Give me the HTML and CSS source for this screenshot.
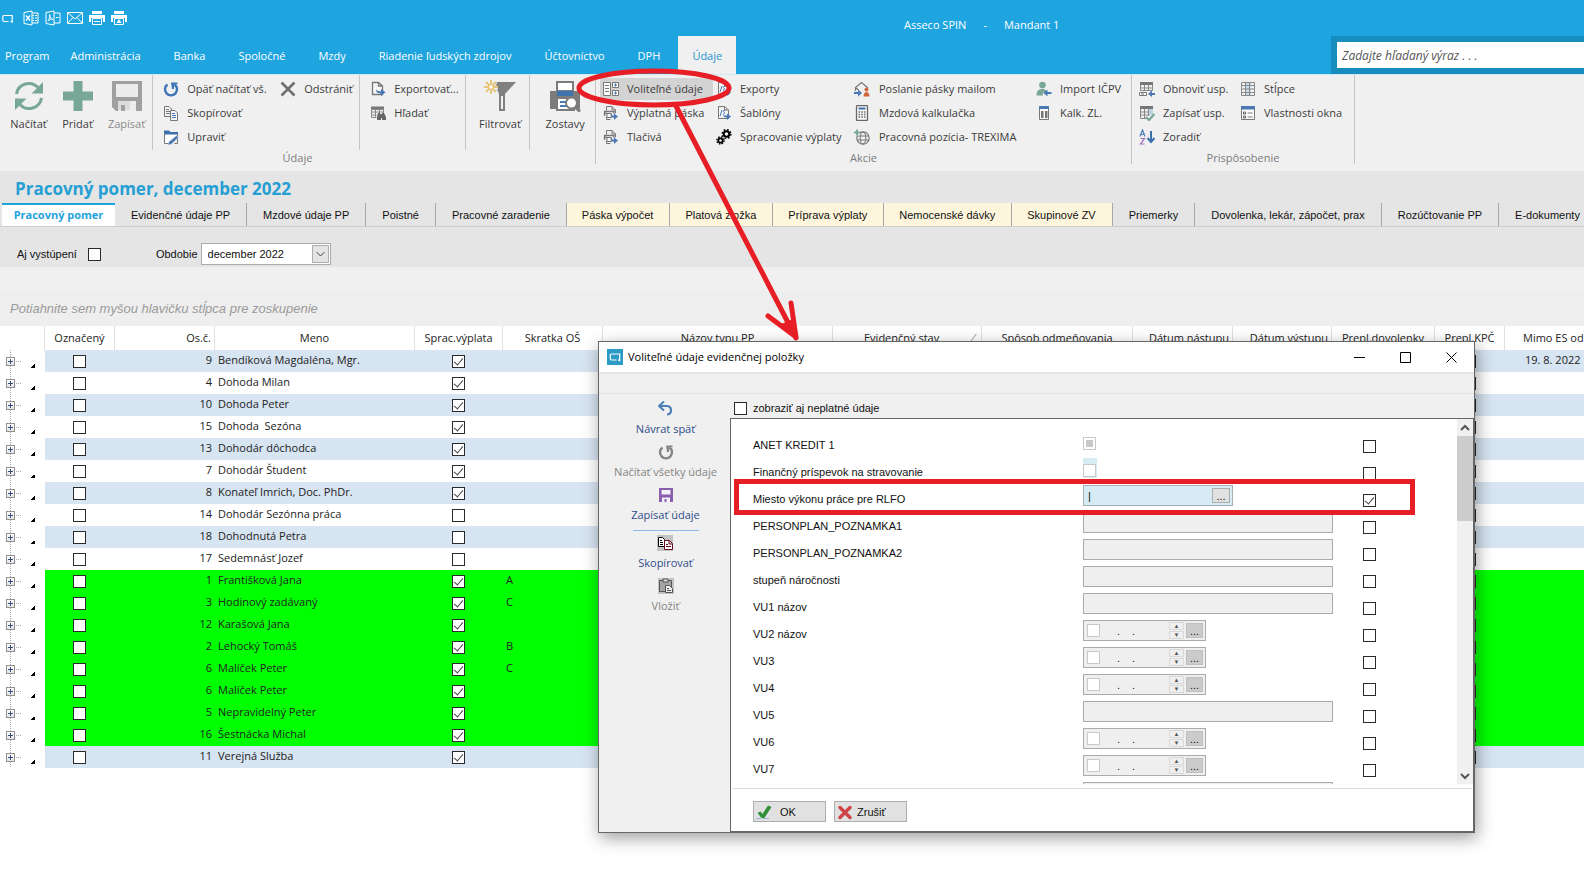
FILE: index.html
```html
<!DOCTYPE html>
<html lang="sk">
<head>
<meta charset="utf-8">
<title>Asseco SPIN - Mandant 1</title>
<link rel="stylesheet" href="styles.css">
</head>
<body>
<svg class="defs" aria-hidden="true">
  <symbol id="i-excel" viewBox="0 0 16 16"><path d="M1 2.500 9 1v14L1 13.500zM9 3h6v10H9M9.500 5.500H11M12 5.500h2M9.500 8H11M12 8h2M9.500 10.500H11M12 10.500h2" fill="none" stroke="#fff"/><path d="M3 5.500l4 5M7 5.500l-4 5" stroke="#fff" stroke-width="1.300"/></symbol>
  <symbol id="i-pdf" viewBox="0 0 16 16"><path d="M1 2.500 9 1v14L1 13.500zM9 3h6v10H9M11 7.500h2.500" fill="none" stroke="#fff"/><path d="M3 11c1.500-2 2-4 1.600-6.500C5 7.500 6 9 8 9.500 6 9 4.500 9.500 3 11z" fill="none" stroke="#fff"/></symbol>
  <symbol id="i-mail" viewBox="0 0 16 16"><path d="M.5 2.500h15v11H.5zM1 3l7 6 7-6M1 13l5-5.500M15 13l-5-5.500" fill="none" stroke="#fff"/></symbol>
  <symbol id="i-print" viewBox="0 0 16 16"><path d="M3 1h10v3H3zM0 5h16v7h-2V8H2v4H0z" fill="#fff"/><path d="M3.500 8.500h9v6h-9zM5 11.500h6" fill="#1ea4df" stroke="#fff"/></symbol>
  <symbol id="i-printa" viewBox="0 0 16 16"><path d="M3 1h10v3H3zM0 5h16v7h-2V8H2v4H0z" fill="#fff"/><path d="M3.500 8.500h9v6h-9z" fill="#1ea4df" stroke="#fff"/><path d="M8 9l2.500 4h-5z" fill="#fff"/></symbol>
  <symbol id="i-refresh" viewBox="0 0 32 32"><path d="M3.500 14A12.500 12.500 0 0 1 25 7.500M28.500 18A12.500 12.500 0 0 1 7 24.500" fill="none" stroke="#78a697" stroke-width="3"/><path d="M30 2v11.500H18.500zM2 30V18.500h11.500z" fill="#78a697"/></symbol>
  <symbol id="i-plus" viewBox="0 0 32 32"><path d="M11.500 1h9v10.500H31v9H20.500V31h-9V20.500H1v-9h10.500z" fill="#78a697"/></symbol>
  <symbol id="i-disk" viewBox="0 0 32 32"><path d="M1 1h30v30H5l-4-4z" fill="#a0a0a0"/><path d="M5 4h22v13H5zM7 21h18v10H7z" fill="#ececec"/><path d="M7 21h12v9H7z" fill="#dcdcdc"/><path d="M10 25h4v6h-4z" fill="#a0a0a0"/></symbol>
  <symbol id="i-reload" viewBox="0 0 16 16"><path d="M4.500 3.500A6 6 0 1 0 11.500 3.500" fill="none" stroke="currentColor" stroke-width="2.400"/><path d="M8 1.500h6.500v1.800H11V8H9z" fill="currentColor"/></symbol>
  <symbol id="i-x" viewBox="0 0 16 16"><path d="M1.500 1.500l13 13M14.500 1.500l-13 13" stroke="#6f6f6f" stroke-width="2.500"/></symbol>
  <symbol id="i-copy" viewBox="0 0 16 16"><path d="M1.500 1.500H6L8.500 4v7.500h-7zM3 4.500h3M3 6.500h4M3 8.500h4" fill="#f4f4f4" stroke="#777"/><path d="M7.500 5.500H12L14.500 8v7.500h-7z" fill="#f4f4f4" stroke="#777"/><path d="M9 8.500h3M9 10.500h4M9 12.500h4" stroke="#4a78b5"/></symbol>
  <symbol id="i-edit" viewBox="0 0 16 16"><path d="M1 2h6l1 2h7v3L8 14H1z" fill="#fff"/><path d="M1 1.500h5L7.500 3H15v2.500H1z" fill="#3c6fae"/><path d="M1.500 4v10.500h4M14.500 5v9.500h-3" fill="none" stroke="#777"/><path d="M13.500 6.500l2 2L8 15.500l-3 .5.7-3z" fill="#4a78b5" stroke="#f0f0f0" stroke-width=".5"/></symbol>
  <symbol id="i-export" viewBox="0 0 16 16"><path d="M2.500 1.500h6L12.500 5v8.500h-10zM8.500 1.500V5h4" fill="#f6f6f6" stroke="#777" stroke-width="1.300"/><path d="M6 8.500c0 3.500 2.500 4 5 4V15l4.500-3.700L11 8v2.200c-2 0-3.500-.2-5-1.700z" fill="#4a78b5"/></symbol>
  <symbol id="i-find" viewBox="0 0 16 16"><path d="M1 1.500h13v3H1z" fill="#777"/><path d="M1.500 4.500h12V8M1.500 4.500v8h5M1.500 7h12M1.500 10h5M5.500 4v8M9.500 4v4" fill="none" stroke="#888"/><path d="M8 8h2v1h2V8h2l2 4v3h-4v-2h-1v2H7v-3z" fill="#666"/></symbol>
  <symbol id="i-filter" viewBox="0 0 32 32"><path d="M10 2h22L21 14v17h-6V14z" fill="#808080"/><path d="M17 16h2v13h-2z" fill="#f0f0f0"/><g stroke="#f0f0f0" stroke-width="3.500"><path d="M7 0v15M0 7.500h14M2 2l10 11M12 2L2 13"/></g><g stroke="#e6c57c" stroke-width="2"><path d="M7 0v14M0 7h14M2 2l10 10M12 2L2 12"/></g><circle cx="7" cy="7" r="2.500" fill="#fff" stroke="#e6c57c" stroke-width="1.500"/></symbol>
  <symbol id="i-report" viewBox="0 0 32 32"><path d="M1 11h30v18H1z" fill="#7c7c7c"/><path d="M8 2h16v9H8z" fill="#fff" stroke="#7c7c7c" stroke-width="2"/><path d="M8 11h16v5H8z" fill="#3f73ad"/><path d="M8 18h17v12H8z" fill="#fff" stroke="#7c7c7c" stroke-width="2"/><path d="M11 22h6M11 26h7" stroke="#4a78b5" stroke-width="2"/><circle cx="22.500" cy="23" r="5.500" fill="#fff" stroke="#7c7c7c" stroke-width="2"/><path d="M26 27l5 4.500" stroke="#7c7c7c" stroke-width="3"/></symbol>
  <symbol id="i-optional" viewBox="0 0 16 16"><path d="M.5 1.500h7v13h-7z" fill="#fafafa" stroke="#777"/><path d="M2 4.500h4M2 7.500h4M2 10.500h4" stroke="#777"/><path d="M9.500 1.500h6v5h-6zM9.500 9.500h6v5h-6z" fill="#fafafa" stroke="#777"/><path d="M11 4h3M12.500 2.500v3M11 12h3M12.500 10.500v3" stroke="#4a78b5"/></symbol>
  <symbol id="i-slip" viewBox="0 0 16 16"><path d="M3.500 5.500v-4h5.500L12.500 5v3M3.500 11.500v3h4M9 1.500V5h3.500" fill="none" stroke="#777"/><path d="M1.500 11V6.500H11V9M1 8.500h3" fill="none" stroke="#777" stroke-width="1.300"/><path d="M4 8.500h4.500v4H4z" fill="#fff" stroke="#777"/><path d="M7 9.500c.5 2.500 2 3 4 3v2.500l4-3.500-4-3v2c-2 0-3 0-4-1z" fill="#4a78b5"/></symbol>
  <symbol id="i-template" viewBox="0 0 16 16"><path d="M2.500 1.500h6L12.500 5v8.500h-10zM8.500 1.500V5h4" fill="#f6f6f6" stroke="#777"/><path d="M4 11l2-6M9 5.500c-2-.5-2 1-1 1.700s.5 2-1 1.800" fill="none" stroke="#4a78b5"/><path d="M7 9.500c.5 2.500 2 3 4 3v2.500l4-3.500-4-3v2c-2 0-3 0-4-1z" fill="#4a78b5"/></symbol>
  <symbol id="i-gears" viewBox="0 0 16 16"><circle cx="10.500" cy="5" r="2.800" fill="none" stroke="#000" stroke-width="2"/><circle cx="10.500" cy="5" r="4.300" fill="none" stroke="#000" stroke-width="1.500" stroke-dasharray="1.700 1.680"/><circle cx="4.500" cy="11.500" r="2.200" fill="none" stroke="#000" stroke-width="1.800"/><circle cx="4.500" cy="11.500" r="3.600" fill="none" stroke="#000" stroke-width="1.400" stroke-dasharray="1.500 1.330"/></symbol>
  <symbol id="i-sendmail" viewBox="0 0 16 16"><path d="M1.500 10V6.500L7.500 1.500l6 5V8M1.500 6.500l3 2.500" fill="none" stroke="#777" stroke-width="1.200"/><path d="M0 11h4V8.500l4 3.500-4 3.500V13H0z" fill="#4a78b5"/><circle cx="12.500" cy="8.500" r="2" fill="#d0663e"/><path d="M9.500 15.500c0-6 6-6 6 0z" fill="#d0663e"/></symbol>
  <symbol id="i-calc" viewBox="0 0 16 16"><rect x="2.500" y=".5" width="11" height="15" rx="1" fill="#fafafa" stroke="#666" stroke-width="1.300"/><path d="M4.500 2.500h7v2h-7z" fill="#3c6fae"/><path d="M4.500 7h7M4.500 9.500h7M4.500 12h7" stroke="#666" stroke-width="1.500" stroke-dasharray="1.600 1.100"/></symbol>
  <symbol id="i-globe" viewBox="0 0 16 16"><circle cx="9" cy="9" r="6.200" fill="none" stroke="#777" stroke-width="1.200"/><ellipse cx="9" cy="9" rx="2.800" ry="6" fill="none" stroke="#777"/><path d="M3 7h12M3 11h12" stroke="#777"/><path d="M0 3.500h6M3 .5v6" stroke="#f0f0f0" stroke-width="3.500"/><path d="M0 3.500h6M3 .5v6" stroke="#78a697" stroke-width="1.800"/></symbol>
  <symbol id="i-person" viewBox="0 0 16 16"><circle cx="6.500" cy="4" r="3.300" fill="#78a697"/><path d="M.5 14.500c0-8 9-8 10-4L7 12v2.500z" fill="#78a697"/><path d="M15.500 11h-4V8.500L7.500 12l4 3.500V13h4z" fill="#4a78b5"/></symbol>
  <symbol id="i-kalk" viewBox="0 0 16 16"><path d="M3.500 1.500h9v13h-9z" fill="#fafafa" stroke="#777"/><path d="M3 1h10v3H3z" fill="#4a78b5"/><path d="M5 6h2.500v7H5zM9 6h2.500v7H9z" fill="#777"/></symbol>
  <symbol id="i-layload" viewBox="0 0 16 16"><path d="M1 1h13v3H1z" fill="#777"/><path d="M1.500 4v5.500h12V4M1.500 7h12M5.500 4v5M9.500 4v5" fill="none" stroke="#888"/><path d="M.5 11.500h7v3h-7zM2 13h3" fill="#fff" stroke="#777"/><path d="M16 12h-3V9.500L9 13l4 3v-2h3z" fill="#4a78b5"/></symbol>
  <symbol id="i-laysave" viewBox="0 0 16 16"><path d="M1 1h13v3H1z" fill="#777"/><path d="M1.500 4v9.500h7M13.500 4v5M1.500 7h12M1.500 10h9M5.500 4v9M9.500 4v7" fill="none" stroke="#888"/><path d="M10 4h4v6h-4z" fill="#b9d3e6"/><path d="M7 12l3 3 5.500-6" fill="none" stroke="#78a697" stroke-width="2.200"/></symbol>
  <symbol id="i-sort" viewBox="0 0 16 16"><path d="M1 7.500L3.500 1 6 7.500M2 5.500h3" fill="none" stroke="#4a78b5" stroke-width="1.200"/><path d="M1.500 9.500h4l-4 5.500h4" fill="none" stroke="#9a6bb5" stroke-width="1.200"/><path d="M12 2v10M8.500 9l3.500 4 3.500-4" fill="none" stroke="#3c6fae" stroke-width="2"/></symbol>
  <symbol id="i-cols" viewBox="0 0 16 16"><path d="M5 1h6v14H5z" fill="#c9dcec"/><path d="M1.500 1.500h13v13h-13zM5.500 1v14M9.500 1v14M1 4.500h13M1 8h13M1 11.500h13" fill="none" stroke="#888"/></symbol>
  <symbol id="i-props" viewBox="0 0 16 16"><path d="M1.500 2.500h13v12h-13z" fill="#fafafa" stroke="#777"/><path d="M1 1h14v3.500H1z" fill="#4a78b5"/><path d="M7.500 8h5M7.500 12h5" stroke="#777" stroke-width="1.200"/><path d="M3.500 7h2v2h-2zM3.500 11h2v2h-2z" fill="none" stroke="#666"/></symbol>
  <symbol id="i-logo" viewBox="0 0 16 16"><path d="M0 0h16v16H0z" fill="#2b9bc6"/><path d="M9.500 11H4.500A1.200 1.200 0 0 1 3.300 9.800V6.200A1.200 1.200 0 0 1 4.500 5h8.200v6.600L11 11" fill="none" stroke="#fff" stroke-width="1.200"/></symbol>
  <symbol id="i-undo" viewBox="0 0 16 16"><path d="M2 5h6.500c6 0 6 8.500.5 8.500" fill="none" stroke="#4a7fb8" stroke-width="2.200"/><path d="M6 .5L1 5l5 4.500" fill="none" stroke="#4a7fb8" stroke-width="2"/></symbol>
  <symbol id="i-save" viewBox="0 0 16 16"><path d="M1 1h14v14H1z" fill="#8a5fb0"/><path d="M3.500 3h9v4.500h-9zM4 10.500h8V15H4z" fill="#f4f0f7"/><path d="M6.500 12h2v3h-2z" fill="#8a5fb0"/></symbol>
  <symbol id="i-copy2" viewBox="0 0 16 16"><path d="M0 0h16v16H0z" fill="#c3c3c3"/><path d="M1.500 2.500h4l2 2v7h-6zM3 5.500h2M3 7.500h3M3 9.500h3" fill="#fff" stroke="#000"/><path d="M7.500 5.500h5l3 3v6h-8zM12 6v3h3M9 9.500h2M9 11.500h5M9 13.500h0" fill="#fff" stroke="#6d0a20"/></symbol>
  <symbol id="i-paste" viewBox="0 0 16 16"><path d="M0 0h16v16H0z" fill="#c3c3c3"/><path d="M1.500 2.500h12v11h-12z" fill="#a5a5a5" stroke="#555"/><path d="M5 1h5v3H5z" fill="#ddd" stroke="#555"/><path d="M7.500 7.500h4l3 3v4h-7zM9 10.500h2M9 12.500h4" fill="#eee" stroke="#555"/></symbol>
  <symbol id="i-ok" viewBox="0 0 16 16"><path d="M0 14.500h5M8 14.500h5" stroke="#9fb4dc"/><path d="M1.500 9l3-1.500L6.500 10 12 1.500l3.500 1.500L8 14.500 5.500 14z" fill="#2f8f3a"/></symbol>
  <symbol id="i-no" viewBox="0 0 16 16"><path d="M3 3.500l10 10M13 3.500l-10 10" stroke="#cf4547" stroke-width="3.500" stroke-linecap="round"/></symbol>
</svg>

<div class="app">
  <header class="top">
    <div class="quick">
      <button class="qb qb-logo" aria-label="Menu"><svg viewBox="0 0 16 16"><path d="M8.500 11.500H4A1.200 1.200 0 0 1 2.800 10.300V6.700A1.200 1.200 0 0 1 4 5.500h8.200v6.600l-1.700-.6" fill="none" stroke="#fff" stroke-width="1.200"/></svg></button>
      <button class="qb" aria-label="Excel"><svg><use href="#i-excel"/></svg></button>
      <button class="qb" aria-label="PDF"><svg><use href="#i-pdf"/></svg></button>
      <button class="qb" aria-label="Mail"><svg><use href="#i-mail"/></svg></button>
      <button class="qb" aria-label="Tlač"><svg><use href="#i-print"/></svg></button>
      <button class="qb" aria-label="Náhľad"><svg><use href="#i-printa"/></svg></button>
      <div class="apptitle"><span>Asseco SPIN</span><span>-</span><span>Mandant 1</span></div>
    </div>
    <nav class="menu">
      <a href="#">Program</a><a href="#">Administrácia</a><a href="#">Banka</a><a href="#">Spoločné</a><a href="#">Mzdy</a><a href="#">Riadenie ľudských zdrojov</a><a href="#">Účtovníctvo</a><a href="#">DPH</a><a href="#" class="on">Údaje</a>
      <div class="search"><input type="text" placeholder="Zadajte hľadaný výraz . . ." aria-label="Hľadať výraz"></div>
    </nav>
  </header>

  <div class="ribbon">
    <section class="group g1">
      <div class="parts">
        <div class="part bigs">
          <button class="big"><svg><use href="#i-refresh"/></svg>Načítať</button>
          <button class="big"><svg><use href="#i-plus"/></svg>Pridať</button>
          <button class="big off"><svg><use href="#i-disk"/></svg>Zapísať</button>
        </div>
        <div class="part acts a1">
          <button class="act"><svg class="blue"><use href="#i-reload"/></svg>Opäť načítať vš.</button>
          <button class="act"><svg><use href="#i-copy"/></svg>Skopírovať</button>
          <button class="act"><svg><use href="#i-edit"/></svg>Upraviť</button>
          <button class="act"><svg><use href="#i-x"/></svg>Odstrániť</button>
        </div>
        <div class="part acts a2">
          <button class="act"><svg><use href="#i-export"/></svg>Exportovať...</button>
          <button class="act"><svg><use href="#i-find"/></svg>Hľadať</button>
        </div>
        <div class="part one"><button class="big"><svg><use href="#i-filter"/></svg>Filtrovať</button></div>
        <div class="part one"><button class="big"><svg><use href="#i-report"/></svg>Zostavy</button></div>
      </div>
      <h3>Údaje</h3>
    </section>
    <section class="group g2">
      <div class="acts a3">
        <button class="act hot"><svg><use href="#i-optional"/></svg>Voliteľné údaje</button>
        <button class="act"><svg><use href="#i-slip"/></svg>Výplatná páska</button>
        <button class="act"><svg><use href="#i-slip"/></svg>Tlačivá</button>
        <button class="act"><svg><use href="#i-template"/></svg>Exporty</button>
        <button class="act"><svg><use href="#i-template"/></svg>Šablóny</button>
        <button class="act"><svg><use href="#i-gears"/></svg>Spracovanie výplaty</button>
        <button class="act wide"><svg><use href="#i-sendmail"/></svg>Poslanie pásky mailom</button>
        <button class="act wide"><svg><use href="#i-calc"/></svg>Mzdová kalkulačka</button>
        <button class="act wide"><svg><use href="#i-globe"/></svg>Pracovná pozícia- TREXIMA</button>
        <button class="act"><svg><use href="#i-person"/></svg>Import IČPV</button>
        <button class="act"><svg><use href="#i-kalk"/></svg>Kalk. ZL.</button>
      </div>
      <h3>Akcie</h3>
    </section>
    <section class="group g3">
      <div class="acts a4">
        <button class="act"><svg><use href="#i-layload"/></svg>Obnoviť usp.</button>
        <button class="act"><svg><use href="#i-laysave"/></svg>Zapísať usp.</button>
        <button class="act"><svg><use href="#i-sort"/></svg>Zoradiť</button>
        <button class="act"><svg><use href="#i-cols"/></svg>Stĺpce</button>
        <button class="act"><svg><use href="#i-props"/></svg>Vlastnosti okna</button>
      </div>
      <h3>Prispôsobenie</h3>
    </section>
  </div>

  <div class="head">
    <h1>Pracovný pomer, december 2022</h1>
    <nav class="tabs">
      <a href="#" class="cur">Pracovný pomer</a><a href="#">Evidenčné údaje PP</a><a href="#">Mzdové údaje PP</a><a href="#">Poistné</a><a href="#">Pracovné zaradenie</a><a href="#" class="y">Páska výpočet</a><a href="#" class="y">Platová zložka</a><a href="#" class="y">Príprava výplaty</a><a href="#" class="y">Nemocenské dávky</a><a href="#" class="y">Skupinové ZV</a><a href="#">Priemerky</a><a href="#">Dovolenka, lekár, zápočet, prax</a><a href="#">Rozúčtovanie PP</a><a href="#">E-dokumenty</a>
    </nav>
    <div class="filter">
      <label for="left">Aj vystúpení</label><input type="checkbox" id="left">
      <label for="period" class="lp">Obdobie</label>
      <div class="sel"><select id="period"><option>december 2022</option></select><svg viewBox="0 0 17 18"><path d="M.5.500h16v17H.5z" fill="#e4e4e4" stroke="#adadad"/><path d="M4.500 7l4 4 4-4" fill="none" stroke="#444"/></svg></div>
    </div>
  </div>
  <div class="band"></div>
  <div class="grouping">Potiahnite sem myšou hlavičku stĺpca pre zoskupenie</div>

  <table class="grid">
    <colgroup><col class="c1"><col class="c2"><col class="c3"><col class="c4"><col class="c5"><col class="c6"><col class="c7"><col class="c8"><col class="c9"><col class="c10"><col class="c11"><col class="c12"><col class="c13"><col></colgroup>
    <thead><tr><th></th><th>Označený</th><th class="r">Os.č.</th><th>Meno</th><th>Sprac.výplata</th><th>Skratka OŠ</th><th>Názov typu PP</th><th><span class="sorted">Evidenčný stav<i>⁄</i></span></th><th>Spôsob odmeňovania</th><th class="r">Dátum nástupu</th><th class="r">Dátum výstupu</th><th>Prepl.dovolenky</th><th>Prepl.KPČ</th><th class="last">Mimo ES od</th></tr></thead>
    <tbody>
      <tr class="b"><td class="t"></td><td class="c"><input type="checkbox" aria-label="Označený"></td><td class="r">9</td><td>Bendíková Magdaléna, Mgr.</td><td class="c"><input type="checkbox" checked aria-label="Výplata"></td><td></td><td colspan="6"></td><td class="c"><input type="checkbox" aria-label="KPČ"></td><td class="last">19. 8. 2022</td></tr>
      <tr><td class="t"></td><td class="c"><input type="checkbox" aria-label="Označený"></td><td class="r">4</td><td>Dohoda Milan</td><td class="c"><input type="checkbox" checked aria-label="Výplata"></td><td></td><td colspan="6"></td><td class="c"><input type="checkbox" aria-label="KPČ"></td><td></td></tr>
      <tr class="b"><td class="t"></td><td class="c"><input type="checkbox" aria-label="Označený"></td><td class="r">10</td><td>Dohoda Peter</td><td class="c"><input type="checkbox" checked aria-label="Výplata"></td><td></td><td colspan="6"></td><td class="c"><input type="checkbox" aria-label="KPČ"></td><td></td></tr>
      <tr><td class="t"></td><td class="c"><input type="checkbox" aria-label="Označený"></td><td class="r">15</td><td>Dohoda&nbsp; Sezóna</td><td class="c"><input type="checkbox" checked aria-label="Výplata"></td><td></td><td colspan="6"></td><td class="c"><input type="checkbox" aria-label="KPČ"></td><td></td></tr>
      <tr class="b"><td class="t"></td><td class="c"><input type="checkbox" aria-label="Označený"></td><td class="r">13</td><td>Dohodár dôchodca</td><td class="c"><input type="checkbox" checked aria-label="Výplata"></td><td></td><td colspan="6"></td><td class="c"><input type="checkbox" aria-label="KPČ"></td><td></td></tr>
      <tr><td class="t"></td><td class="c"><input type="checkbox" aria-label="Označený"></td><td class="r">7</td><td>Dohodár Študent</td><td class="c"><input type="checkbox" checked aria-label="Výplata"></td><td></td><td colspan="6"></td><td class="c"><input type="checkbox" aria-label="KPČ"></td><td></td></tr>
      <tr class="b"><td class="t"></td><td class="c"><input type="checkbox" aria-label="Označený"></td><td class="r">8</td><td>Konateľ Imrich, Doc. PhDr.</td><td class="c"><input type="checkbox" checked aria-label="Výplata"></td><td></td><td colspan="6"></td><td class="c"><input type="checkbox" aria-label="KPČ"></td><td></td></tr>
      <tr><td class="t"></td><td class="c"><input type="checkbox" aria-label="Označený"></td><td class="r">14</td><td>Dohodár Sezónna práca</td><td class="c"><input type="checkbox" aria-label="Výplata"></td><td></td><td colspan="6"></td><td class="c"><input type="checkbox" aria-label="KPČ"></td><td></td></tr>
      <tr class="b"><td class="t"></td><td class="c"><input type="checkbox" aria-label="Označený"></td><td class="r">18</td><td>Dohodnutá Petra</td><td class="c"><input type="checkbox" aria-label="Výplata"></td><td></td><td colspan="6"></td><td class="c"><input type="checkbox" aria-label="KPČ"></td><td></td></tr>
      <tr><td class="t"></td><td class="c"><input type="checkbox" aria-label="Označený"></td><td class="r">17</td><td>Sedemnásť Jozef</td><td class="c"><input type="checkbox" aria-label="Výplata"></td><td></td><td colspan="6"></td><td class="c"><input type="checkbox" aria-label="KPČ"></td><td></td></tr>
      <tr class="g"><td class="t"></td><td class="c"><input type="checkbox" aria-label="Označený"></td><td class="r">1</td><td>Františková Jana</td><td class="c"><input type="checkbox" checked aria-label="Výplata"></td><td>A</td><td colspan="6"></td><td class="c"><input type="checkbox" aria-label="KPČ"></td><td></td></tr>
      <tr class="g"><td class="t"></td><td class="c"><input type="checkbox" aria-label="Označený"></td><td class="r">3</td><td>Hodinový zadávaný</td><td class="c"><input type="checkbox" checked aria-label="Výplata"></td><td>C</td><td colspan="6"></td><td class="c"><input type="checkbox" aria-label="KPČ"></td><td></td></tr>
      <tr class="g"><td class="t"></td><td class="c"><input type="checkbox" aria-label="Označený"></td><td class="r">12</td><td>Karašová Jana</td><td class="c"><input type="checkbox" checked aria-label="Výplata"></td><td></td><td colspan="6"></td><td class="c"><input type="checkbox" aria-label="KPČ"></td><td></td></tr>
      <tr class="g"><td class="t"></td><td class="c"><input type="checkbox" aria-label="Označený"></td><td class="r">2</td><td>Lehocký Tomáš</td><td class="c"><input type="checkbox" checked aria-label="Výplata"></td><td>B</td><td colspan="6"></td><td class="c"><input type="checkbox" aria-label="KPČ"></td><td></td></tr>
      <tr class="g"><td class="t"></td><td class="c"><input type="checkbox" aria-label="Označený"></td><td class="r">6</td><td>Malíček Peter</td><td class="c"><input type="checkbox" checked aria-label="Výplata"></td><td>C</td><td colspan="6"></td><td class="c"><input type="checkbox" aria-label="KPČ"></td><td></td></tr>
      <tr class="g"><td class="t"></td><td class="c"><input type="checkbox" aria-label="Označený"></td><td class="r">6</td><td>Malíček Peter</td><td class="c"><input type="checkbox" checked aria-label="Výplata"></td><td></td><td colspan="6"></td><td class="c"><input type="checkbox" aria-label="KPČ"></td><td></td></tr>
      <tr class="g"><td class="t"></td><td class="c"><input type="checkbox" aria-label="Označený"></td><td class="r">5</td><td>Nepravidelný Peter</td><td class="c"><input type="checkbox" checked aria-label="Výplata"></td><td></td><td colspan="6"></td><td class="c"><input type="checkbox" aria-label="KPČ"></td><td></td></tr>
      <tr class="g"><td class="t"></td><td class="c"><input type="checkbox" aria-label="Označený"></td><td class="r">16</td><td>Šestnácka Michal</td><td class="c"><input type="checkbox" checked aria-label="Výplata"></td><td></td><td colspan="6"></td><td class="c"><input type="checkbox" aria-label="KPČ"></td><td></td></tr>
      <tr class="b"><td class="t"></td><td class="c"><input type="checkbox" aria-label="Označený"></td><td class="r">11</td><td>Verejná Služba</td><td class="c"><input type="checkbox" checked aria-label="Výplata"></td><td></td><td colspan="6"></td><td class="c"><input type="checkbox" aria-label="KPČ"></td><td></td></tr>
    </tbody>
  </table>
</div>

<div class="dialog" role="dialog" aria-labelledby="dt">
  <div class="bar">
    <svg class="logo"><use href="#i-logo"/></svg><h2 id="dt">Voliteľné údaje evidenčnej položky</h2>
    <button aria-label="Minimalizovať"><svg viewBox="0 0 11 11"><path d="M0 5.500h11" stroke="#000"/></svg></button>
    <button aria-label="Maximalizovať"><svg viewBox="0 0 11 11"><path d="M.5.500h10v10H.5z" fill="none" stroke="#000"/></svg></button>
    <button aria-label="Zavrieť"><svg viewBox="0 0 11 11"><path d="M.5.500l10 10M10.500.500l-10 10" stroke="#000"/></svg></button>
  </div>
  <div class="strip"></div>
  <div class="body">
    <div class="side">
      <button><svg><use href="#i-undo"/></svg>Návrat späť</button>
      <button class="off"><svg><use href="#i-reload"/></svg>Načítať všetky údaje</button>
      <button><svg><use href="#i-save"/></svg>Zapísať údaje</button>
      <hr>
      <button><svg><use href="#i-copy2"/></svg>Skopírovať</button>
      <button class="off"><svg><use href="#i-paste"/></svg>Vložiť</button>
    </div>
    <div class="main">
      <div class="inv"><input type="checkbox" id="inv"><label for="inv">zobraziť aj neplatné údaje</label></div>
      <div class="panel">
        <div class="scroll">
          <div class="rows">
            <div class="row"><label for="f0">ANET KREDIT 1</label><span class="cell"><input type="checkbox" class="dim mid" id="f0"></span><input type="checkbox" class="pick" aria-label="Použiť ANET KREDIT 1"></div>
            <div class="row"><label for="f1">Finančný príspevok na stravovanie</label><span class="cell"><span class="tint"><input type="checkbox" class="dim" id="f1"></span></span><input type="checkbox" class="pick" aria-label="Použiť príspevok"></div>
            <div class="row"><label for="f2">Miesto výkonu práce pre RLFO</label><span class="cell"><span class="lookup"><input type="text" id="f2" value="|"><button aria-label="Vybrať">...</button></span></span><input type="checkbox" class="pick" checked aria-label="Použiť miesto"></div>
            <div class="row"><label for="f3">PERSONPLAN_POZNAMKA1</label><span class="cell"><input type="text" class="tx" id="f3" disabled></span><input type="checkbox" class="pick" aria-label="Použiť"></div>
            <div class="row"><label for="f4">PERSONPLAN_POZNAMKA2</label><span class="cell"><input type="text" class="tx" id="f4" disabled></span><input type="checkbox" class="pick" aria-label="Použiť"></div>
            <div class="row"><label for="f5">stupeň náročnosti</label><span class="cell"><input type="text" class="tx" id="f5" disabled></span><input type="checkbox" class="pick" aria-label="Použiť"></div>
            <div class="row"><label for="f6">VU1 názov</label><span class="cell"><input type="text" class="tx" id="f6" disabled></span><input type="checkbox" class="pick" aria-label="Použiť"></div>
            <div class="row"><label for="f7">VU2 názov</label><span class="cell"><span class="date"><input type="checkbox" class="dim" id="f7"><span class="dots"><b>.</b><b>.</b></span><span class="spin"><button aria-label="Viac">▲</button><button aria-label="Menej">▼</button></span><button class="more" aria-label="Vybrať">...</button></span></span><input type="checkbox" class="pick" aria-label="Použiť"></div>
            <div class="row"><label for="f8">VU3</label><span class="cell"><span class="date"><input type="checkbox" class="dim" id="f8"><span class="dots"><b>.</b><b>.</b></span><span class="spin"><button aria-label="Viac">▲</button><button aria-label="Menej">▼</button></span><button class="more" aria-label="Vybrať">...</button></span></span><input type="checkbox" class="pick" aria-label="Použiť"></div>
            <div class="row"><label for="f9">VU4</label><span class="cell"><span class="date"><input type="checkbox" class="dim" id="f9"><span class="dots"><b>.</b><b>.</b></span><span class="spin"><button aria-label="Viac">▲</button><button aria-label="Menej">▼</button></span><button class="more" aria-label="Vybrať">...</button></span></span><input type="checkbox" class="pick" aria-label="Použiť"></div>
            <div class="row"><label for="f10">VU5</label><span class="cell"><input type="text" class="tx" id="f10" disabled></span><input type="checkbox" class="pick" aria-label="Použiť"></div>
            <div class="row"><label for="f11">VU6</label><span class="cell"><span class="date"><input type="checkbox" class="dim" id="f11"><span class="dots"><b>.</b><b>.</b></span><span class="spin"><button aria-label="Viac">▲</button><button aria-label="Menej">▼</button></span><button class="more" aria-label="Vybrať">...</button></span></span><input type="checkbox" class="pick" aria-label="Použiť"></div>
            <div class="row"><label for="f12">VU7</label><span class="cell"><span class="date"><input type="checkbox" class="dim" id="f12"><span class="dots"><b>.</b><b>.</b></span><span class="spin"><button aria-label="Viac">▲</button><button aria-label="Menej">▼</button></span><button class="more" aria-label="Vybrať">...</button></span></span><input type="checkbox" class="pick" aria-label="Použiť"></div>
            <div class="row"><span></span><span class="cell"><input type="text" class="tx" aria-label="Ďalší údaj" disabled></span></div>
          </div>
          <div class="sb">
            <svg viewBox="0 0 16 17"><path d="M4 11l4-4 4 4" fill="none" stroke="#555" stroke-width="2"/></svg>
            <div class="thumb"></div>
            <svg viewBox="0 0 16 17"><path d="M4 7l4 4 4-4" fill="none" stroke="#555" stroke-width="2"/></svg>
          </div>
        </div>
        <div class="foot">
          <button><svg><use href="#i-ok"/></svg><span>OK</span></button>
          <button><svg><use href="#i-no"/></svg><span>Zrušiť</span></button>
        </div>
      </div>
    </div>
  </div>
</div>

<svg class="marks" viewBox="0 0 1584 870" aria-hidden="true">
  <g fill="none" stroke="#e71e25">
    <ellipse cx="654" cy="88" rx="75" ry="17" stroke-width="5"/>
    <path d="M676 106L796 338M768 316l28 21-5-34" stroke-width="5" stroke-linecap="round" stroke-linejoin="round"/>
    <path d="M780 325l16 10-4-15z" fill="#e71e25"/>
    <path d="M736.500 481.500h676v31h-676z" stroke-width="5"/>
  </g>
</svg>
</body>
</html>
```
FILE: styles.css
```css
* { box-sizing: border-box; }
html, body { height: 100%; }
body { margin: 0; overflow: hidden; position: relative; background: #fff; color: #111; font: 11px/16px "Open Sans", "Noto Sans", sans-serif; }
button, input, select { font: inherit; color: inherit; margin: 0; }
button { border: 0; background: none; padding: 0; }
a { color: inherit; text-decoration: none; }
h1, h2, h3 { margin: 0; font-weight: 400; }
svg { display: block; flex: none; }
.defs { position: absolute; width: 0; height: 0; }

input[type="checkbox"] { appearance: none; flex: none; width: 13px; height: 13px; border: 1px solid #2a2a2a; background: #fff; display: grid; place-items: center; }
input[type="checkbox"]:checked::after { content: ""; width: 4px; height: 8px; margin-bottom: 2px; border: solid #444; border-width: 0 1px 1px 0; transform: rotate(40deg); }

/* title bar and menu */
.top { background: #1ea4df; color: #fff; height: 75px; border-bottom: 1px solid #cdeaf7; display: flex; flex-direction: column; justify-content: space-between; }
.quick { display: flex; align-items: center; gap: 6px; height: 36px; }
.qb, .qb svg { width: 16px; height: 16px; }
.qb-logo { width: 17px; }
.apptitle { flex: 1; display: flex; gap: 17px; padding: 14px 0 0 771px; }
.menu { display: flex; height: 38px; }
.menu a { padding: 12px 18px 0 15px; white-space: nowrap; }
.menu a:first-child { padding: 12px 6px 0 5px; }
.menu .on { background: #f0f0f0; color: #1e95cf; width: 58px; text-align: center; padding: 12px 0 0; }
.search { margin-left: auto; width: 253px; background: #168cbf; padding: 6px 0 6px 6px; }
.search input { width: 100%; height: 26px; border: 0; padding: 0 5px; background: #fff; font-size: 12px; font-style: italic; }
.search input::placeholder { color: #555; }

/* ribbon */
.ribbon { background: #f0f0f0; height: 96px; display: flex; color: #3c3c3c; }
.group { border-right: 1px solid #c4c4c4; height: 89px; display: flex; flex-direction: column; justify-content: space-between; }
.group h3 { text-align: center; font-size: 11px; color: #7c7c7c; line-height: 16px; }
.g1 { width: 596px; }
.g2 { width: 536px; }
.g3 { width: 223px; }
.parts { display: flex; height: 76px; }
.part { border-right: 1px solid #c4c4c4; }
.part:last-child { border: 0; }
.bigs { width: 154px; display: flex; padding-left: 4px; }
.big { width: 49px; display: flex; flex-direction: column; align-items: center; gap: 4px; padding-top: 5px; justify-content: flex-start; }
.big svg { width: 32px; height: 32px; }
.big.off { color: #8a8a8a; }
.one { width: 65px; display: flex; justify-content: center; padding-left: 5px; }
.acts { display: grid; grid-auto-flow: column; grid-template-rows: repeat(3, 24px); padding-top: 3px; justify-content: start; }
.act { display: flex; align-items: center; gap: 8px; height: 22px; padding-left: 3px; white-space: nowrap; text-align: left; }
.act svg { width: 16px; height: 16px; }
.act.wide { gap: 9px; }
.blue { color: #3f74b4; }
.hot { background: #d3d3d3; }
.a1 { width: 208px; padding-left: 7px; grid-template-columns: 117px 80px; }
.a2 { width: 106px; padding-left: 7px; }
.a3 { padding-left: 4px; grid-template-columns: 113px 138px 182px 90px; }
.a4 { padding-left: 4px; grid-template-columns: 101px 110px; }

/* page head */
.head { background: #e5e5e5; height: 96px; display: flex; flex-direction: column; }
.head h1 { font-size: 17px; line-height: 24px; font-weight: 700; color: #259fd4; padding: 6px 0 2px 15px; height: 32px; }
.tabs { display: flex; padding-left: 2px; height: 24px; border-bottom: 1px solid #cfcfcf; font: 11px/24px "Liberation Sans", Arial, sans-serif; overflow: hidden; color: #111; }
.tabs a { border-right: 1px solid #a8a8a8; text-align: center; white-space: nowrap; padding: 0 16px; flex: none; }
.tabs a:last-child { border: 0; }
.tabs .cur { font: 700 11px/20px "Open Sans", "Noto Sans", sans-serif; background: #fff; color: #1fa2dc; border: 0; border-top: 2px solid #1fa2dc; width: 113px; padding: 0; }
.tabs .y { background: #fdf6dd; padding: 0 16px 0 15px; }
.filter { display: flex; align-items: center; padding: 14px 0 0 17px; height: 40px; font-family: "Liberation Sans", Arial, sans-serif; }
.filter input { margin-left: 11px; }
.lp { margin: 0 3px 0 55px; }
.sel { display: grid; align-items: center; background: #fff; border: 1px solid #ababab; width: 130px; height: 22px; padding: 0 1px 0 6px; }
.sel select, .sel svg { grid-area: 1 / 1; }
.sel select { appearance: none; border: 0; background: none; width: 100%; height: 20px; padding: 0; }
.sel svg { width: 17px; height: 18px; justify-self: end; pointer-events: none; }
.band { height: 24px; background: #f0f0f0; }
.grouping { height: 35px; background: #eeeeee; color: #9a9a9a; font: italic 13px/35px "Liberation Sans", Arial, sans-serif; padding-left: 10px; }

/* employee grid */
.grid { width: 100%; table-layout: fixed; border-collapse: separate; border-spacing: 0; color: #222; }
.c1 { width: 45px; } .c2 { width: 70px; } .c3 { width: 100px; } .c4 { width: 200px; } .c5 { width: 88px; } .c6 { width: 100px; } .c7 { width: 230px; } .c8 { width: 149px; } .c9 { width: 151px; } .c10 { width: 100px; } .c11 { width: 99px; } .c12 { width: 103px; } .c13 { width: 70px; }
.grid th { height: 24px; font-weight: 400; padding: 0; border-right: 1px solid #e0e0e0; white-space: nowrap; }
.grid th.last { border: 0; }
.grid td { height: 22px; padding: 0 0 2px 3px; line-height: 16px; white-space: nowrap; overflow: hidden; }
.grid .r { text-align: right; padding-right: 3px; }
.grid .last { text-align: left; padding-left: 18px; }
.grid td.last { padding-left: 20px; }
.grid .c { padding: 0 2px 0 0; }
.grid .c input { margin: 0 auto; }
.sorted { display: flex; justify-content: space-between; padding: 0 7px 0 31px; }
.sorted i { color: #888; }
.b td { background: #d7e4f1; }
.g td { background: #00ff00; }
.grid td.t { background:
  linear-gradient(#33507f, #33507f) 8px 11px / 5px 1px no-repeat,
  linear-gradient(#33507f, #33507f) 10px 9px / 1px 5px no-repeat,
  linear-gradient(#fff, #e4e4e4) 7px 8px / 7px 7px no-repeat,
  linear-gradient(#919191, #919191) 6px 7px / 9px 9px no-repeat,
  linear-gradient(135deg, transparent 50%, #000 50%) 31px 14px / 4px 4px no-repeat,
  repeating-linear-gradient(90deg, #aaa 0 1px, transparent 1px 2px) 16px 11px / 5px 1px no-repeat,
  repeating-linear-gradient(#aaa 0 1px, transparent 1px 2px) 10px 0 / 1px 22px no-repeat,
  #fff; }

/* dialog window */
.dialog { position: absolute; left: 598px; top: 341px; width: 877px; height: 492px; border: 1px solid #666; background: #f0f0f0; box-shadow: 2px 5px 16px rgba(0, 0, 0, .38); display: flex; flex-direction: column; }
.bar { height: 32px; background: #fff; border-bottom: 2px solid #e5e5e5; display: flex; align-items: center; padding-left: 8px; }
.bar h2 { flex: 1; font-size: 11px; color: #000; padding-left: 5px; }
.bar button { width: 46px; display: flex; justify-content: center; }
.bar button svg { width: 11px; height: 11px; }
.logo { width: 16px; height: 16px; }
.strip { height: 20px; border-bottom: 1px solid #e3e3e3; }
.body { flex: 1; display: flex; }
.side { width: 131px; padding: 7px 0 0 2px; display: flex; flex-direction: column; align-items: center; gap: 3px; color: #2f4d8a; }
.side button { display: flex; flex-direction: column; align-items: center; gap: 4px; height: 40px; }
.side svg { width: 16px; height: 16px; }
.side .off { color: #848484; }
.side hr { width: 66px; height: 1px; margin: 0 0 1px; border: 0; background: #8fb8ea; }
.main { flex: 1; display: flex; flex-direction: column; font-family: "Liberation Sans", Arial, sans-serif; color: #111; }
.inv { height: 24px; display: flex; align-items: center; gap: 6px; padding: 4px 0 0 4px; }
.panel { flex: 1; background: #fff; border: 1px solid #666; display: flex; flex-direction: column; }
.scroll { height: 365px; display: flex; }
.rows { flex: 1; overflow: hidden; padding: 12px 0 0 22px; }
.row { display: grid; grid-template-columns: 330px 280px 13px; height: 27px; }
.row label { padding-top: 6px; }
.cell { display: flex; align-items: flex-start; }
.row .pick { margin-top: 9px; }
.row input.dim { border-color: #c8c8c8; }
.row .mid { margin-top: 6px; background: #fff linear-gradient(#c8c8c8, #c8c8c8) center / 7px 7px no-repeat; }
.tint { background: #d6ebf3; padding: 6px 1px 1px 0; }
.tx { width: 250px; height: 21px; border: 1px solid #ababab; background: #efefef; }
.lookup { width: 150px; height: 21px; border: 1px solid #a5b0b5; background: #d6ebf3; display: flex; align-items: center; padding-right: 2px; }
.lookup input { flex: 1; min-width: 0; border: 0; background: none; padding: 0 4px; }
.lookup button { width: 18px; height: 15px; background: #e1e1e1; border: 1px solid #adadad; line-height: 10px; }
.date { width: 123px; height: 21px; border: 1px solid #ababab; background: #efefef; display: flex; align-items: center; padding: 0 2px 0 3px; }
.dots { flex: 1; display: flex; gap: 12px; padding-left: 17px; }
.dots b { font-weight: 400; }
.spin { width: 15px; display: flex; flex-direction: column; gap: 1px; margin-right: 2px; }
.spin button { height: 8px; font-size: 6px; line-height: 6px; color: #555; border: 1px solid #d8d8d8; }
.more { width: 17px; height: 15px; background: #cbcbcb; border: 1px solid #bfbfbf; line-height: 10px; }
.sb { width: 16px; background: #f0f0f0; display: flex; flex-direction: column; }
.sb svg { width: 16px; height: 17px; }
.thumb { height: 85px; background: #cdcdcd; margin-bottom: auto; }
.foot { margin: 4px 1px 0; border-top: 1px solid #dcdcdc; padding: 12px 0 0 21px; display: flex; gap: 8px; }
.foot button { width: 73px; height: 21px; background: #e1e1e1; border: 1px solid #adadad; display: flex; align-items: center; padding-left: 2px; }
.foot svg { width: 16px; height: 16px; }
.foot span { padding-left: 4px; }
.foot button:first-child span { padding-left: 8px; }

/* red annotation strokes over the page */
.marks { position: absolute; left: 0; top: 0; width: 1584px; height: 870px; pointer-events: none; }
```
